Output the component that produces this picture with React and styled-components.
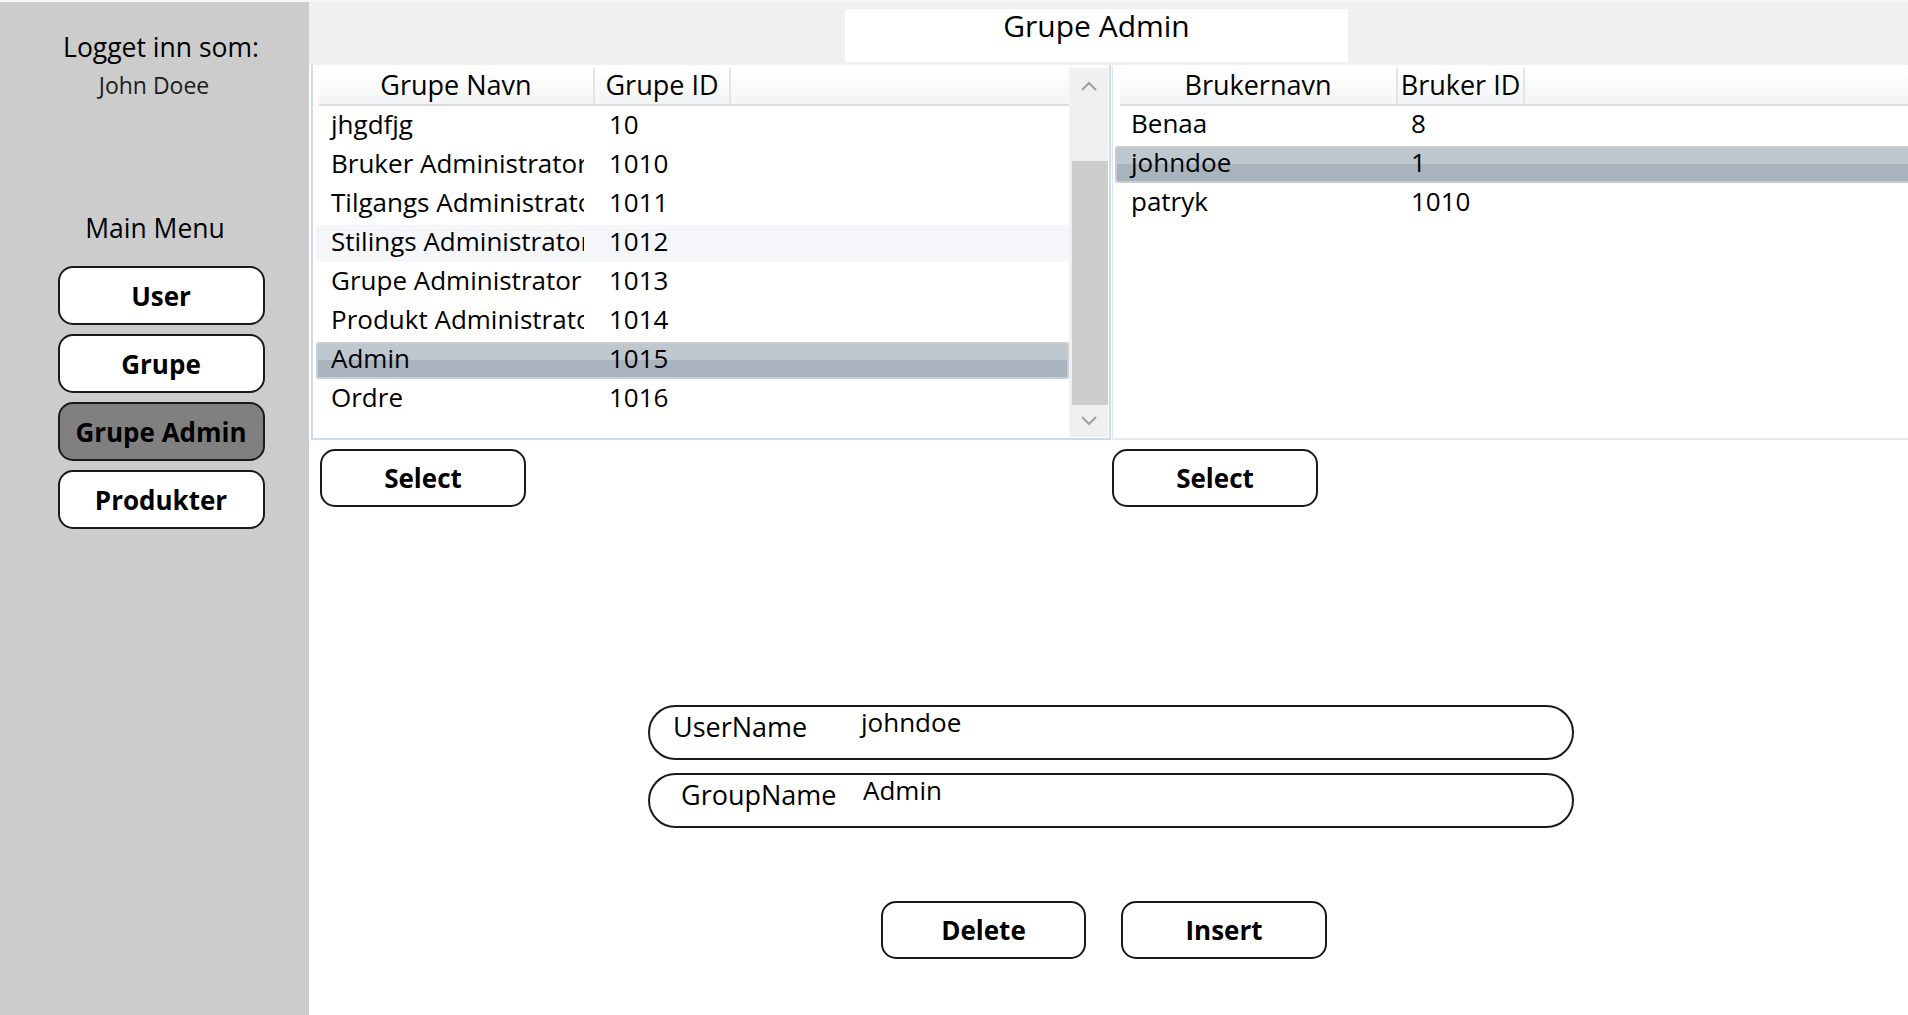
import React from "react";
import styled, { createGlobalStyle } from "styled-components";

const FONT = `"Open Sans", "Noto Sans", "Liberation Sans", sans-serif`;

const GlobalStyle = createGlobalStyle`
  html, body { margin: 0; padding: 0; background: #ffffff; }
  body { font-family: ${FONT}; color: #000; }
  *, *::before, *::after { box-sizing: border-box; }
`;

const Window = styled.div`
  width: 1908px;
  height: 1015px;
  display: flex;
  border-top: 2px solid #f7f7f7;
  background: #ffffff;
  overflow: hidden;
`;

/* ---------- Sidebar ---------- */
const Sidebar = styled.aside`
  width: 309px;
  flex: none;
  background: #cccccc;
  display: flex;
  flex-direction: column;
  align-items: center;
  padding: 28px 44px 0 57px;
`;

const Caption = styled.div`
  font-size: ${(p) => p.$size || 26.5}px;
  line-height: ${(p) => p.$lh || 34}px;
  margin-top: ${(p) => p.$mt || 0}px;
  margin-right: ${(p) => p.$shift || 0}px;
  color: ${(p) => (p.$soft ? "#1c1c1c" : "#000")};
  white-space: nowrap;
`;

const MenuList = styled.nav`
  margin-top: 21px;
  display: flex;
  flex-direction: column;
  gap: 9px;
`;

const PillButton = styled.button`
  width: ${(p) => p.$w || 207}px;
  height: ${(p) => p.$h || 59}px;
  border: 2px solid #1a1a1a;
  border-radius: 15px;
  background: ${(p) => (p.$active ? "#808080" : "#ffffff")};
  font-family: ${FONT};
  font-weight: 700;
  font-size: 26px;
  line-height: 1;
  color: #000;
  display: flex;
  align-items: center;
  justify-content: center;
  padding: 0;
  cursor: pointer;
`;

/* ---------- Main ---------- */
const Main = styled.main`
  flex: 1;
  min-width: 0;
  display: flex;
  flex-direction: column;
  background: #ffffff;
`;

const TopBar = styled.header`
  height: 63px;
  flex: none;
  background: #f0f0f0;
  padding: 7px 0 0 536px;
`;

const TitleBox = styled.div`
  width: 503px;
  height: 53px;
  background: #ffffff;
  text-align: center;
  font-size: 30px;
  line-height: 34px;
  white-space: nowrap;
`;

const TwoCols = styled.div`
  display: grid;
  grid-template-columns: 800px 1fr;
  column-gap: 1px;
  padding-left: 2px;
  margin-top: ${(p) => p.$mt || 0}px;
  height: ${(p) => (p.$h ? `${p.$h}px` : "auto")};
  flex: none;
`;

const ListPanel = styled.section`
  display: flex;
  background: #ffffff;
  overflow: hidden;
  border-bottom: 2px solid ${(p) => (p.$focus ? "#c9ddf0" : "#e9e9e9")};
  border-left: ${(p) => (p.$focus ? "2px solid #c9ddf0" : "1px solid #dde6ef")};
  border-right: ${(p) => (p.$focus ? "2px solid #c9ddf0" : "none")};
  padding-right: ${(p) => (p.$focus ? 1 : 0)}px;
`;

const TableArea = styled.div`
  flex: 1;
  min-width: 0;
  padding: 3px 0 0 ${(p) => p.$pl}px;
  overflow: hidden;
`;

const HeaderRow = styled.div`
  display: flex;
  height: 38px;
  margin-left: ${(p) => p.$ml}px;
  background: linear-gradient(#ffffff, #f3f4f5);
  border-bottom: 2px solid #dcdcdc;
  width: ${(p) => (p.$w ? `${p.$w}px` : "3000px")};
`;

const HeaderCell = styled.div`
  width: ${(p) => p.$w}px;
  flex: none;
  text-align: center;
  font-size: 27px;
  line-height: 34px;
  border-right: 2px solid #e4e4e4;
  white-space: nowrap;
`;

const Rows = styled.div`
  padding-top: ${(p) => p.$pt}px;
  display: flex;
  flex-direction: column;
  gap: 2px;
`;

const Row = styled.div`
  display: flex;
  height: 37px;
  width: ${(p) => (p.$wide ? "3000px" : "auto")};
  border: 2px solid ${(p) => (p.$selected ? "#c9cdd2" : "transparent")};
  border-radius: 3px;
  background: ${(p) =>
    p.$selected
      ? "linear-gradient(#bfc7ce 0, #bfc7ce 50%, #a9b3be 50%, #a9b3be 100%)"
      : p.$hover
      ? "#f4f6f9"
      : "transparent"};
  font-size: 26px;
  line-height: 29px;
  white-space: nowrap;
`;

const Cell = styled.div`
  width: ${(p) => (p.$w ? `${p.$w}px` : "auto")};
  flex: none;
  margin-right: ${(p) => p.$mr || 0}px;
  padding-left: ${(p) => p.$pl}px;
  overflow: ${(p) => (p.$clip ? "hidden" : "visible")};
`;

const ScrollBar = styled.div`
  width: 39px;
  flex: none;
  margin: 3px 0 1px;
  background: #f0f0f0;
  display: flex;
  flex-direction: column;
`;

const ScrollBtn = styled.div`
  height: ${(p) => p.$h}px;
  flex: none;
  display: flex;
  align-items: center;
  justify-content: center;
`;

const Track = styled.div`
  flex: 1;
  padding: 57px 0 0 3px;
`;

const Thumb = styled.div`
  height: 244px;
  background: #cdcdcd;
`;

const SelectWrap = styled.div`
  padding-left: ${(p) => p.$pl || 0}px;
`;

const FieldStack = styled.div`
  margin: ${(p) => p.$mt}px 0 0 339px;
  width: 926px;
  display: flex;
  flex-direction: column;
  gap: 13px;
`;

const Field = styled.div`
  height: 55px;
  border: 2px solid #1a1a1a;
  border-radius: 28px;
  display: grid;
  grid-template-columns: 211px 1fr;
  align-items: start;
`;

const FieldLabel = styled.label`
  padding: 2.5px 0 0 ${(p) => p.$pl}px;
  font-size: 27px;
  line-height: 34px;
  white-space: nowrap;
`;

const FieldValue = styled.div`
  font-size: 26px;
  line-height: 30px;
  padding-left: ${(p) => p.$pl || 0}px;
  white-space: nowrap;
`;

const Actions = styled.div`
  margin: 73px 0 0 572px;
  display: flex;
  gap: 35px;
`;

const Chevron = ({ up }) => (
  <svg width="18" height="12" viewBox="0 0 18 12">
    <polyline
      points={up ? "2,10 9,3 16,10" : "2,2 9,9 16,2"}
      fill="none"
      stroke="#a3a3a3"
      strokeWidth="2.2"
    />
  </svg>
);

const groups = [
  ["jhgdfjg", "10"],
  ["Bruker Administrator", "1010"],
  ["Tilgangs Administrator", "1011"],
  ["Stilings Administrator", "1012"],
  ["Grupe Administrator", "1013"],
  ["Produkt Administrator", "1014"],
  ["Admin", "1015"],
  ["Ordre", "1016"],
];

const users = [
  ["Benaa", "8"],
  ["johndoe", "1"],
  ["patryk", "1010"],
];

export default function App() {
  return (
    <>
      <GlobalStyle />
      <Window>
        <Sidebar>
          <Caption>Logget inn som:</Caption>
          <Caption $size={23} $lh={29} $mt={7} $shift={14} $soft>
            John Doee
          </Caption>
          <Caption $mt={111} $shift={12}>
            Main Menu
          </Caption>
          <MenuList>
            <PillButton>User</PillButton>
            <PillButton>Grupe</PillButton>
            <PillButton $active>Grupe Admin</PillButton>
            <PillButton>Produkter</PillButton>
          </MenuList>
        </Sidebar>

        <Main>
          <TopBar>
            <TitleBox>Grupe Admin</TitleBox>
          </TopBar>

          <TwoCols $h={375}>
            <ListPanel $focus>
              <TableArea $pl={3}>
                <HeaderRow $ml={3} $w={750}>
                  <HeaderCell $w={276}>Grupe Navn</HeaderCell>
                  <HeaderCell $w={136}>Grupe ID</HeaderCell>
                </HeaderRow>
                <Rows $pt={2}>
                  {groups.map(([name, id], i) => (
                    <Row key={id} $selected={i === 6} $hover={i === 3}>
                      <Cell $w={266} $mr={11} $pl={13} $clip>
                        {name}
                      </Cell>
                      <Cell $pl={14}>{id}</Cell>
                    </Row>
                  ))}
                </Rows>
              </TableArea>
              <ScrollBar>
                <ScrollBtn $h={36}>
                  <Chevron up />
                </ScrollBtn>
                <Track>
                  <Thumb />
                </Track>
                <ScrollBtn $h={32}>
                  <Chevron />
                </ScrollBtn>
              </ScrollBar>
            </ListPanel>

            <ListPanel>
              <TableArea $pl={2}>
                <HeaderRow $ml={5}>
                  <HeaderCell $w={278}>Brukernavn</HeaderCell>
                  <HeaderCell $w={127}>Bruker ID</HeaderCell>
                </HeaderRow>
                <Rows $pt={1}>
                  {users.map(([name, id], i) => (
                    <Row key={name} $wide $selected={i === 1}>
                      <Cell $w={281} $pl={14}>
                        {name}
                      </Cell>
                      <Cell $pl={13}>{id}</Cell>
                    </Row>
                  ))}
                </Rows>
              </TableArea>
            </ListPanel>
          </TwoCols>

          <TwoCols $mt={9}>
            <SelectWrap $pl={9}>
              <PillButton $w={206} $h={58}>Select</PillButton>
            </SelectWrap>
            <SelectWrap>
              <PillButton $w={206} $h={58}>Select</PillButton>
            </SelectWrap>
          </TwoCols>

          <FieldStack $mt={198}>
            <Field>
              <FieldLabel $pl={23}>UserName</FieldLabel>
              <FieldValue>johndoe</FieldValue>
            </Field>
            <Field>
              <FieldLabel $pl={31}>GroupName</FieldLabel>
              <FieldValue $pl={2}>Admin</FieldValue>
            </Field>
          </FieldStack>

          <Actions>
            <PillButton $w={205} $h={58}>Delete</PillButton>
            <PillButton $w={206} $h={58}>Insert</PillButton>
          </Actions>
        </Main>
      </Window>
    </>
  );
}
